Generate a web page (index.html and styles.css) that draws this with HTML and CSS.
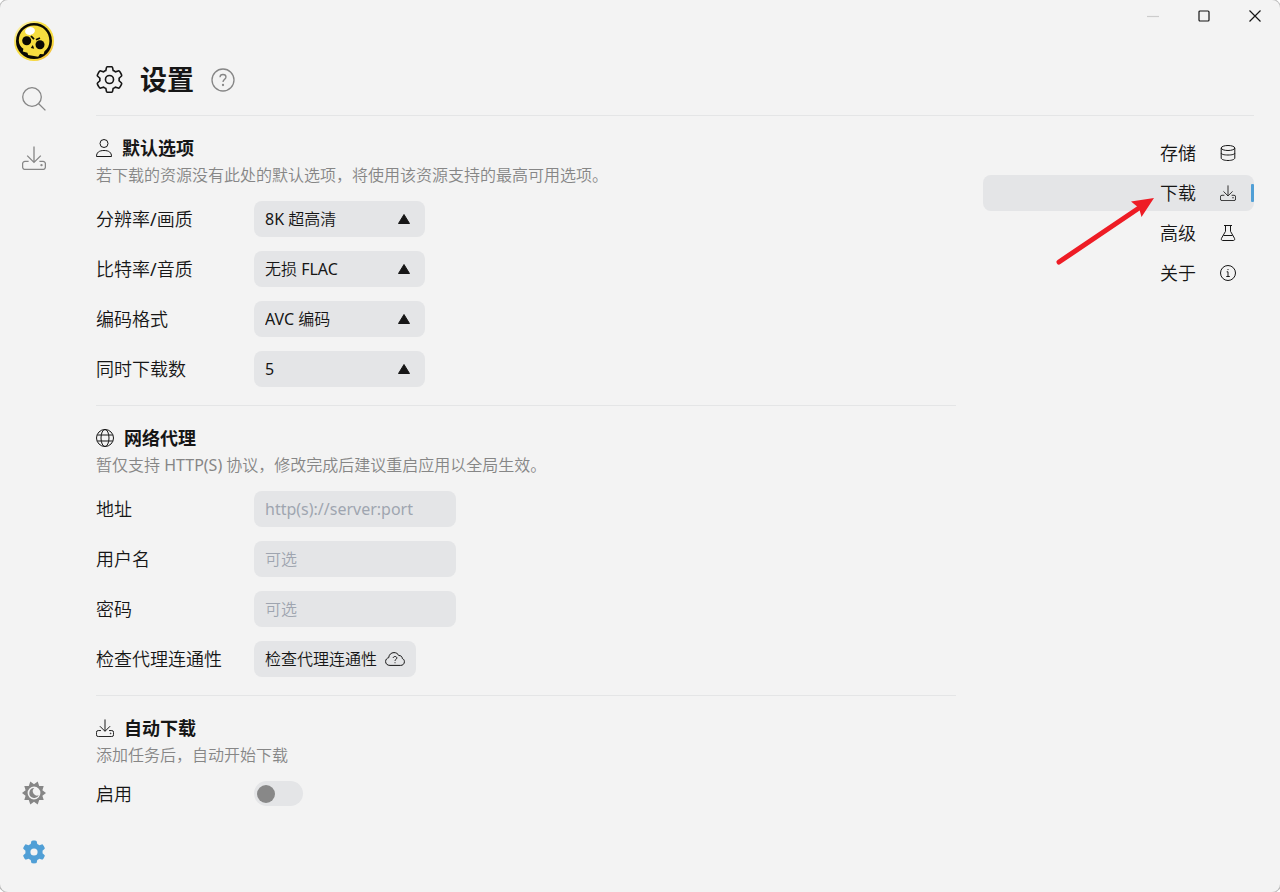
FILE: index.html
```html
<!DOCTYPE html>
<html lang="zh-CN">
<head>
<meta charset="utf-8">
<meta name="viewport" content="width=device-width, initial-scale=1">
<title>设置</title>
<link rel="stylesheet" href="styles.css">
</head>
<body>
<svg class="defs" aria-hidden="true">
  <symbol id="gear" viewBox="-12 -12 536 536"><path d="M495.9 166.6c3.2 8.7 .5 18.4-6.4 24.6l-43.3 39.4c1.1 8.3 1.7 16.8 1.7 25.4s-.6 17.1-1.7 25.4l43.3 39.4c6.9 6.2 9.6 15.9 6.4 24.6c-4.4 11.9-9.7 23.3-15.8 34.3l-4.7 8.1c-6.6 11-14 21.4-22.1 31.2c-5.9 7.2-15.7 9.6-24.5 6.8l-55.7-17.7c-13.4 10.3-28.2 18.9-44 25.4l-12.5 57.1c-2 9.1-9 16.3-18.2 17.8c-13.8 2.3-28 3.5-42.5 3.5s-28.7-1.2-42.5-3.5c-9.2-1.5-16.2-8.7-18.2-17.8l-12.5-57.1c-15.8-6.5-30.6-15.1-44-25.4L83.1 425.9c-8.8 2.8-18.6 .3-24.5-6.8c-8.1-9.8-15.5-20.2-22.1-31.2l-4.7-8.1c-6.1-11-11.4-22.4-15.8-34.3c-3.2-8.7-.5-18.4 6.4-24.6l43.3-39.4C64.6 273.1 64 264.6 64 256s.6-17.1 1.7-25.4L22.4 191.2c-6.9-6.2-9.6-15.9-6.4-24.6c4.4-11.9 9.7-23.3 15.8-34.3l4.7-8.1c6.6-11 14-21.4 22.1-31.2c5.9-7.2 15.7-9.6 24.5-6.8l55.7 17.7c13.4-10.3 28.2-18.9 44-25.4l12.5-57.1c2-9.1 9-16.3 18.2-17.8C227.3 1.2 241.5 0 256 0s28.7 1.2 42.5 3.5c9.2 1.5 16.2 8.7 18.2 17.8l12.5 57.1c15.8 6.5 30.6 15.1 44 25.4l55.7-17.7c8.8-2.8 18.6-.3 24.5 6.8c8.1 9.8 15.5 20.2 22.1 31.2l4.7 8.1c6.1 11 11.4 22.4 15.8 34.3zM256 336a80 80 0 1 0 0-160 80 80 0 1 0 0 160z"/></symbol>
  <symbol id="download" viewBox="0 0 24 24"><path d="M12 .6v15.600M5.200 9.600l6.800 6.800 6.800-6.800M6.600 15.400H3A2.400 2.400 0 0 0 .6 17.800V21A2.400 2.400 0 0 0 3 23.400h18a2.400 2.400 0 0 0 2.400-2.400v-3.200A2.400 2.400 0 0 0 21 15.400h-3.600"/><circle cx="19.500" cy="19.200" r=".5"/></symbol>
</svg>
<div class="window">
  <aside class="sidebar">
    <a class="logo" href="#home" aria-label="主页">
      <svg viewBox="0 0 40 40">
        <defs><linearGradient id="rim" x1="0" y1="0" x2="1" y2="1"><stop offset="0" stop-color="#fffbe0"/><stop offset=".35" stop-color="#f7df45"/><stop offset=".75" stop-color="#f7d93c"/><stop offset="1" stop-color="#ee9a3c"/></linearGradient></defs>
        <circle cx="20" cy="20" r="20" fill="url(#rim)"/>
        <circle cx="20" cy="20" r="18" fill="#0a0903"/>
        <path d="M20 4.500C11 4.500 4.800 11.500 4.800 19.500c0 3.500 1.800 6.500 4.600 8.300l-.6 2.700 4.600 1.200.8 2.300 10 1.700 1.800-2.700 3.500.2 1-3c3.200-2.200 4.900-5.900 4.900-10.200C35.400 11 29 4.500 20 4.500z" fill="#f6dd3f"/>
        <ellipse cx="16" cy="10" rx="5" ry="3.800" transform="rotate(-15 16 10)" fill="#fff"/>
        <circle cx="12.700" cy="19.700" r="4.500" fill="#0a0903"/><circle cx="26" cy="23.700" r="4.500" fill="#0a0903"/>
        <path d="M17 15l3 3.200M26 17l-4 1.800" stroke="#0a0903" stroke-width="1.800"/><path d="M18.800 24l-2 3 3.400.8z" fill="#0a0903"/>
      </svg>
    </a>
    <a class="side-link" href="#search" aria-label="搜索"><svg class="line" viewBox="0 0 24 24"><circle cx="10" cy="10" r="9.300"/><path d="M16.700 16.700l6.700 6.700"/></svg></a>
    <a class="side-link" href="#downloads" aria-label="下载"><svg class="line"><use href="#download"/></svg></a>
    <button class="side-link side-bottom" type="button" aria-label="切换主题">
      <svg viewBox="0 0 24 24"><path fill="currentColor" fill-rule="evenodd" d="M12 3.200L15.700.6 17.200 4.900 21.700 4.900 20.400 9.300 24 12 20.400 14.700 21.700 19.100 17.200 19.100 15.700 23.400 12 20.800 8.300 23.400 6.800 19.100 2.300 19.100 3.600 14.700 0 12 3.600 9.300 2.300 4.900 6.800 4.900 8.300.6zM12 5.600a6.400 6.400 0 1 0 0 12.800 6.400 6.400 0 0 0 0-12.800z"/><path fill="currentColor" d="M12.300 7a5 5 0 1 0 4.500 7.200A4.300 4.300 0 0 1 12.300 7z"/></svg>
    </button>
    <a class="side-link active" href="#settings" aria-label="设置"><svg class="solid"><use href="#gear"/></svg></a>
  </aside>

  <div class="page">
    <div class="window-controls">
      <button type="button" aria-label="最小化" disabled><svg viewBox="0 0 12 12"><path d="M0 6.500h12"/></svg></button>
      <button type="button" aria-label="最大化"><svg viewBox="0 0 12 12"><rect x="1" y="1" width="10" height="10" rx="1"/></svg></button>
      <button type="button" aria-label="关闭"><svg viewBox="0 0 12 12"><path d="M.5.5l11 11M11.500.5l-11 11"/></svg></button>
    </div>
    <header class="header">
      <svg class="header-gear"><use href="#gear"/></svg>
      <h1>设置</h1>
      <button class="help" type="button" aria-label="帮助"><svg class="line" viewBox="0 0 24 24"><circle cx="12" cy="12" r="11"/><path d="M9 9.200C9 7.500 10.300 6.500 12 6.500s3 1 3 2.600c0 2.400-3 2.200-3 5"/><circle cx="12" cy="17" r=".5"/></svg></button>
    </header>
    <div class="columns">
      <main class="content">
        <section class="section">
          <h2><svg class="icon-person" viewBox="0 0 16 18"><circle cx="8" cy="4.500" r="4"/><path d="M.5 17.500c0-4 2.500-6 7.500-6s7.500 2 7.500 6z"/></svg>默认选项</h2>
          <p>若下载的资源没有此处的默认选项，将使用该资源支持的最高可用选项。</p>
          <div class="rows">
            <div class="row"><label for="quality">分辨率/画质</label><span class="select"><select id="quality"><option>8K 超高清</option></select><svg viewBox="0 0 12 10"><path d="M6 .5l5.500 9H.5z"/></svg></span></div>
            <div class="row"><label for="bitrate">比特率/音质</label><span class="select"><select id="bitrate"><option>无损 FLAC</option></select><svg viewBox="0 0 12 10"><path d="M6 .5l5.500 9H.5z"/></svg></span></div>
            <div class="row"><label for="codec">编码格式</label><span class="select"><select id="codec"><option>AVC 编码</option></select><svg viewBox="0 0 12 10"><path d="M6 .5l5.500 9H.5z"/></svg></span></div>
            <div class="row"><label for="count">同时下载数</label><span class="select"><select id="count"><option>5</option></select><svg viewBox="0 0 12 10"><path d="M6 .5l5.500 9H.5z"/></svg></span></div>
          </div>
        </section>
        <section class="section">
          <h2><svg viewBox="0 0 18 18"><circle cx="9" cy="9" r="8.500"/><ellipse cx="9" cy="9" rx="4" ry="8.500"/><path d="M1.200 6h15.600M1.200 12h15.600"/></svg>网络代理</h2>
          <p>暂仅支持 HTTP(S) 协议，修改完成后建议重启应用以全局生效。</p>
          <div class="rows">
            <div class="row"><label for="address">地址</label><input class="field" id="address" type="text" placeholder="http(s)://server:port"></div>
            <div class="row"><label for="user">用户名</label><input class="field" id="user" type="text" placeholder="可选"></div>
            <div class="row"><label for="password">密码</label><input class="field" id="password" type="password" placeholder="可选"></div>
            <div class="row"><span id="check-label">检查代理连通性</span><button class="check" type="button" aria-describedby="check-label">检查代理连通性<svg viewBox="0 0 20 14"><path d="M5 13.400C2.300 13.400.6 11.800.6 9.500c0-2 1.300-3.400 3.100-3.800C3.900 2.700 6.100.6 9 .6c2.200 0 3.800 1 4.700 2.900 2.200-.1 3.500 1.100 3.600 3 1.300.5 2.100 1.700 2.100 3.200 0 2.200-1.600 3.700-3.800 3.700z"/><path d="M8.200 6c.1-1 .8-1.500 1.800-1.500s1.900.6 1.900 1.500c0 1.300-1.900 1.300-1.900 2.800M10 10.300v.9"/></svg></button></div>
          </div>
        </section>
        <section class="section">
          <h2><svg class="line"><use href="#download"/></svg>自动下载</h2>
          <p>添加任务后，自动开始下载</p>
          <div class="rows">
            <div class="row toggle-row"><label for="auto">启用</label><input class="toggle" id="auto" type="checkbox" role="switch"></div>
          </div>
        </section>
      </main>
      <nav class="nav" aria-label="设置分类">
        <a href="#storage">存储<svg viewBox="0 0 16 16"><ellipse cx="8" cy="3" rx="6.800" ry="2.500"/><path d="M1.200 3v10c0 1.400 3 2.500 6.800 2.500s6.800-1.100 6.800-2.500V3M1.200 8C1.200 9.400 4.200 10 8 10s6.800-.6 6.800-2"/></svg></a>
        <a class="current" href="#download-settings" aria-current="page">下载<svg class="line"><use href="#download"/></svg></a>
        <a href="#advanced">高级<svg viewBox="0 0 16 16"><path d="M4 .5h8M5.500.5v5.800l-4 7c-.6 1.200 0 2.200 1.200 2.200h10.600c1.200 0 1.800-1 1.200-2.200l-4-7V.5M3.500 10.500h9"/></svg></a>
        <a href="#about">关于<svg viewBox="0 0 16 16"><circle cx="8" cy="8" r="7.500"/><path d="M6.700 6.800H8v4.700M6.300 11.500h3.500M8 4v1.100"/></svg></a>
        <svg class="pointer" viewBox="0 0 100 72" aria-hidden="true"><path d="M4 67L84 13" stroke="#ee1c25" stroke-width="5" stroke-linecap="round"/><path d="M99 3L76 6.500l8 6.500 2.500 9z" fill="#ee1c25"/></svg>
      </nav>
    </div>
  </div>
</div>
</body>
</html>
```
FILE: styles.css
```css
* { box-sizing: border-box; }
body {
  margin: 0;
  background: #fff;
  color: #161616;
  font-family: "Noto Sans", "Noto Sans CJK SC DemiLight", "Noto Sans CJK SC", sans-serif;
  font-size: 18px;
  line-height: 24px;
}
h1, h2 { font-family: "Noto Sans", "Noto Sans CJK SC", sans-serif; }
a { color: inherit; text-decoration: none; }
button, input, select { font: inherit; color: inherit; }
button { border: 0; padding: 0; background: none; cursor: pointer; }
svg { display: block; flex: none; fill: none; stroke: currentColor; stroke-width: 1; overflow: visible; }
.defs { position: absolute; width: 0; height: 0; }

.window {
  display: flex;
  min-height: 100vh;
  border-radius: 8px;
  background: #f3f3f3;
  box-shadow: 0 0 0 1px #bbb;
}
.sidebar {
  display: flex;
  flex-direction: column;
  align-items: center;
  width: 68px;
  padding: 21px 0 28px;
  gap: 35px;
}
.logo { margin-bottom: -9px; }
.logo svg { width: 40px; height: 40px; stroke: none; }
.side-link { display: flex; color: #868686; }
.side-link svg { width: 24px; height: 24px; }
.side-link svg:not(.line) { stroke: none; }
.side-link .solid { fill: currentColor; }
.side-bottom { margin-top: auto; }
.active { color: #509fd6; }
.line { stroke-width: 1.3; }

.page { flex: 1; min-width: 0; padding: 0 26px 0 28px; }
.window-controls { display: flex; justify-content: flex-end; margin-right: -26px; }
.window-controls button { display: grid; place-items: center; width: 51px; height: 32px; }
.window-controls button:disabled { color: #ccc; }
.window-controls svg { width: 12px; height: 12px; stroke-width: 1.2; }

.header {
  display: flex;
  align-items: center;
  height: 84px;
  gap: 17px;
  border-bottom: 1px solid #e4e5e6;
  padding-top: 12px;
}
.header-gear { width: 27px; height: 27px; stroke-width: 32; }
h1 { margin: 0; font-size: 27px; line-height: 36px; }
.help { color: #868686; }
.help svg { width: 24px; height: 24px; }

.columns { display: grid; grid-template-columns: minmax(0, 1fr) 271px; gap: 27px; }
.section { padding: 20px 0 18px; border-bottom: 1px solid #e4e5e6; }
.section:last-child { border-bottom: 0; }
h2 { display: flex; align-items: center; gap: 10px; margin: 0; font-size: 18px; line-height: 24px; }
h2 svg { width: 18px; height: 18px; }
h2 .icon-person { width: 16px; }
p { margin: 3px 0 0; color: #868686; font-size: 16px; line-height: 24px; }
.rows { display: grid; gap: 14px; margin-top: 14px; }
.row { display: grid; grid-template-columns: 158px minmax(0, 1fr); align-items: center; justify-items: start; min-height: 36px; }
.select { display: grid; align-items: center; width: 171px; }
.select select, .select svg { grid-area: 1 / 1; }
.select svg { width: 12px; height: 10px; margin-right: 15px; justify-self: end; fill: #161616; stroke-linejoin: round; pointer-events: none; }
select, .field, .check { height: 36px; border: 0; border-radius: 8px; background: #e4e5e7; padding: 0 11px; font-size: 16px; }
select { appearance: none; width: 100%; }
.field { width: 202px; }
.field::placeholder { color: #9fa5b0; opacity: 1; }
.check { display: flex; align-items: center; gap: 8px; }
.check svg { width: 20px; height: 14px; }
.toggle-row { min-height: 24px; }
.toggle { appearance: none; display: flex; align-items: center; width: 49px; height: 25px; margin: 0; padding: 3px; border-radius: 13px; background: #e4e5e7; }
.toggle::before { content: ""; width: 18px; height: 18px; border-radius: 50%; background: #888; }
.toggle:checked::before { margin-left: auto; }

.nav { position: relative; display: flex; flex-direction: column; gap: 4px; padding-top: 19px; }
.nav a { position: relative; display: flex; align-items: center; justify-content: flex-end; gap: 24px; height: 36px; padding-right: 18px; border-radius: 8px; }
.nav a svg { width: 16px; height: 16px; }
.nav .current { background: #e4e5e7; }
.nav .current::after { content: ""; position: absolute; top: 9px; right: 0; width: 3px; height: 18px; border-radius: 1px; background: #509fd6; }
.pointer { position: absolute; top: 79px; left: 72px; width: 100px; height: 72px; stroke: none; }
```
